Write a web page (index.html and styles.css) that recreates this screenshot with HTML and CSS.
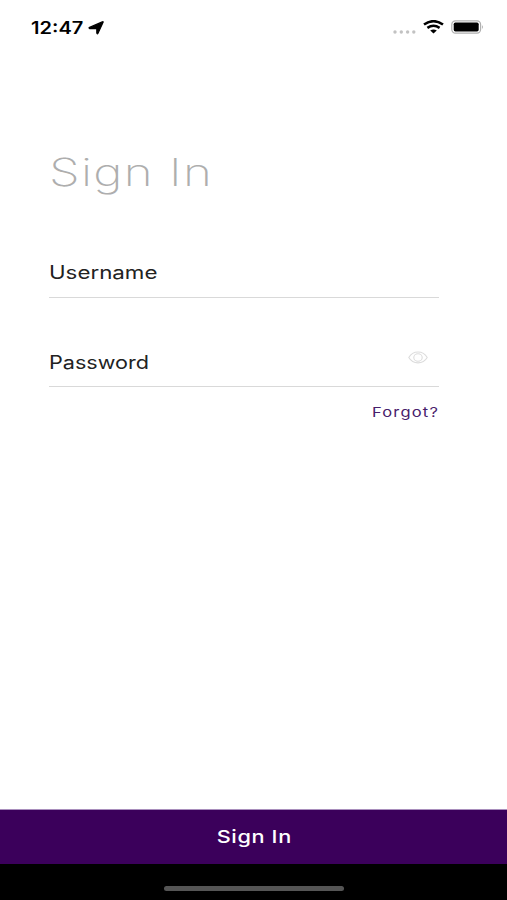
FILE: index.html
```html
<!DOCTYPE html>
<html lang="en">
<head>
<meta charset="utf-8">
<meta name="viewport" content="width=device-width, initial-scale=1">
<title>Sign In</title>
<link rel="stylesheet" href="styles.css">
</head>
<body>
<div class="screen">
  <header class="status">
    <div class="status-left">
      <span class="clock">12:47</span>
      <svg class="location" width="17" height="14" viewBox="0 0 17 14"><path d="M15.2 1 10 12.3Q9.3 13.5 8.8 12.1V7.6H1.7Q.3 7.1 1.6 6.4L14.3.9Q15.5.5 15.2 1Z"/></svg>
    </div>
    <div class="status-right">
      <svg class="dots" width="23" height="4" viewBox="0 0 23 4"><circle cx="2" cy="2" r="1.7"/><circle cx="8.3" cy="2" r="1.7"/><circle cx="14.6" cy="2" r="1.7"/><circle cx="20.8" cy="2" r="1.7"/></svg>
      <svg class="wifi" width="21" height="14" viewBox="0 0 21 14"><path d="M1 4.6Q10.5-2.3 20 4.6M4.4 7.9Q10.5 3.7 16.6 7.9"/><path class="wifi-base" d="M7.2 10.6Q10.5 8.2 13.8 10.6L10.5 13.4Z"/></svg>
      <svg class="battery" width="33" height="14" viewBox="0 0 33 14"><rect class="battery-case" x=".8" y=".8" width="28.8" height="12.4" rx="3.6"/><rect x="2.7" y="2.6" width="25" height="8.8" rx="1.7"/><path class="battery-tip" d="M31 4.9q1.8 2.1 0 4.4z"/></svg>
    </div>
  </header>
  <main class="form">
    <h1 class="title"><span class="stretch">Sign In</span></h1>
    <div class="field"><span class="stretch">Username</span></div>
    <div class="field password">
      <span class="stretch">Password</span>
      <svg class="eye" width="20" height="13" viewBox="0 0 20 13"><path d="M.8 6.5C5-.9 15-.9 19.2 6.5 15 13.7 5 13.7.8 6.5Z"/><ellipse cx="10" cy="6.5" rx="4.2" ry="3.8"/></svg>
    </div>
    <a class="forgot"><span class="stretch">Forgot?</span></a>
  </main>
  <div class="submit"><span class="stretch">Sign In</span></div>
  <footer class="home"><div class="home-bar"></div></footer>
</div>
</body>
</html>
```
FILE: styles.css
```css
* { box-sizing: border-box; }
body { margin: 0; background: #fff; font-family: Inter, "Liberation Sans", sans-serif; }
.screen { height: 900px; display: flex; flex-direction: column; overflow: hidden; }
.stretch { display: inline-block; transform-origin: left center; white-space: nowrap; }

.status { display: flex; justify-content: space-between; height: 54px; padding: 0 24px 0 31px; }
.status-left, .status-right { display: flex; align-items: center; height: 54px; }
.status-left { height: 55px; }
.clock { width: 57px; font-size: 17px; font-weight: 600; line-height: 20px; transform: scaleX(1.18); transform-origin: left center; }
.location { fill: #000; stroke: #000; stroke-width: 1.2; stroke-linejoin: round; }
.status-right { gap: 7px; }
.dots { fill: #c2c2c2; margin-top: 9px; }
.wifi { fill: none; stroke: #000; stroke-width: 2.5; }
.wifi-base { fill: #000; stroke: none; }
.battery { margin-right: -1px; }
.battery-case { fill: none; stroke: #b0b0b0; stroke-width: 1.2; }
.battery-tip { fill: #999; }

.form { flex: 1; display: flex; flex-direction: column; padding: 0 68px 0 49px; }
.title { margin: 94px 0 0; height: 49px; font-size: 38.5px; line-height: 49px; font-weight: 200; color: #aeaeae; letter-spacing: 1px; }
.title .stretch { transform: scaleX(1.28); }
.field { display: flex; justify-content: space-between; height: 45px; margin-top: 56px; border-bottom: 1px solid #d9d9d9; font-size: 18px; line-height: 39px; color: #222; }
.field .stretch { transform: scaleX(1.24); }
.password { margin-top: 44px; line-height: 41px; }
.password .stretch { transform: scaleX(1.2); }
.eye { margin: 9px 11px 0 0; fill: none; stroke: #dcdcdc; stroke-width: 1.1; }
.forgot { align-self: flex-end; margin-top: 15px; font-size: 13.5px; line-height: 20px; letter-spacing: 1px; color: #47206b; }
.forgot .stretch { transform: scaleX(1.22); transform-origin: right center; }

.submit { height: 55px; padding-left: 2px; border-top: 1px solid #a98fbd; background: #3b005b; color: #fff; text-align: center; font-size: 17.5px; font-weight: 500; line-height: 53px; letter-spacing: .5px; }
.submit .stretch { transform: scaleX(1.24); transform-origin: center; }
.home { height: 36px; background: #000; padding-top: 22px; }
.home-bar { width: 180px; height: 5px; margin: 0 auto; border-radius: 3px; background: #555; }
```
